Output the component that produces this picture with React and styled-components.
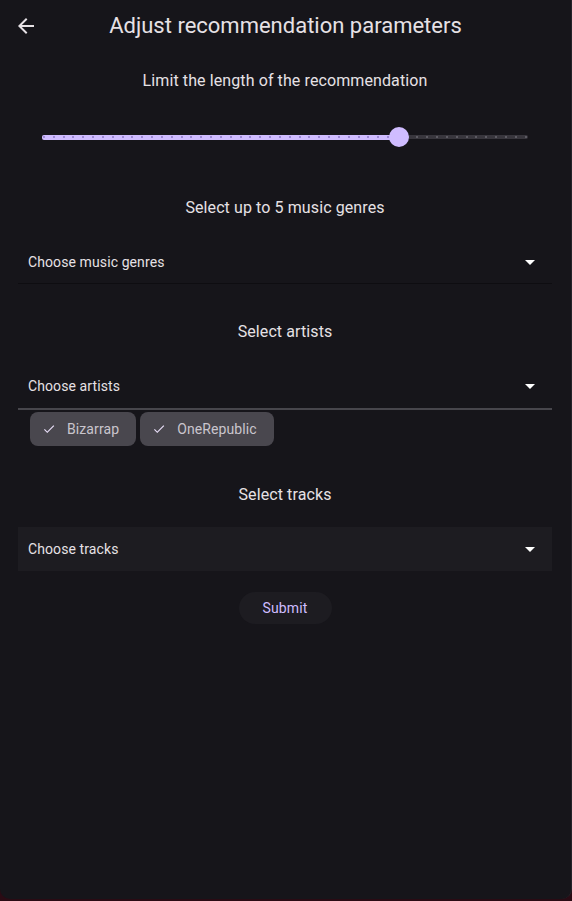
import React from 'react';
import styled, { createGlobalStyle } from 'styled-components';

const GlobalStyle = createGlobalStyle`
  html, body {
    margin: 0;
    padding: 0;
    background: #2a0b14;
    font-family: Roboto, 'Noto Sans', sans-serif;
  }
  * {
    box-sizing: border-box;
  }
`;

const Dialog = styled.div`
  height: 899px;
  background: #16151a;
  border-radius: 0 0 10px 10px;
  border-right: 1px solid #25242a;
  color: #e6e1e5;
  display: flex;
  flex-direction: column;
`;

const Header = styled.header`
  height: 51px;
  display: grid;
  grid-template-columns: 52px 1fr 52px;
  align-items: center;
`;

const BackButton = styled.button`
  width: 24px;
  height: 24px;
  margin: 0 0 0 14px;
  padding: 0;
  border: none;
  background: none;
  color: #e6e1e5;
  display: flex;
  cursor: pointer;
`;

const Title = styled.h1`
  margin: 0;
  text-align: center;
  font-size: 22px;
  font-weight: 400;
  line-height: 28px;
  color: #e6e1e5;
`;

const Content = styled.div`
  display: flex;
  flex-direction: column;
  padding: 0 19px 0 18px;
`;

const Heading = styled.h2`
  margin: ${(p) => p.$top}px 0 0;
  text-align: center;
  font-size: 16px;
  font-weight: 400;
  line-height: 24px;
  letter-spacing: 0.1px;
  color: #e6e1e5;
`;

const SliderWrap = styled.div`
  margin-top: 24px;
  height: 40px;
  padding: 0 24px;
  display: flex;
  align-items: center;
`;

const Track = styled.div`
  position: relative;
  width: 100%;
  height: 4px;
  border-radius: 2px;
  background: #38363d;
`;

const ActiveTrack = styled.div`
  position: absolute;
  left: 0;
  top: -0.5px;
  bottom: -0.5px;
  border-radius: 2px 0 0 2px;
  background: #cfbcff;
`;

const Ticks = styled.div`
  position: absolute;
  inset: 0 1px;
  display: flex;
  justify-content: space-between;
  align-items: center;
`;

const Tick = styled.span`
  width: 2px;
  height: 2px;
  border-radius: 1px;
  background: ${(p) => (p.$active ? '#8c79c9' : '#6a6870')};
`;

const Thumb = styled.span`
  position: absolute;
  top: 50%;
  width: 20px;
  height: 20px;
  margin: -10px 0 0 -10px;
  border-radius: 50%;
  background: #cfbcff;
`;

const Field = styled.div`
  margin-top: 20px;
  height: ${(p) => (p.$strong ? 46 : 44)}px;
  padding: 0 10px;
  display: flex;
  align-items: center;
  justify-content: space-between;
  background: ${(p) => (p.$filled ? '#1d1c21' : 'transparent')};
  border-bottom: ${(p) =>
    p.$filled ? 'none' : p.$strong ? '2px solid #47464c' : '1px solid #0e0d11'};
  font-size: 14px;
  color: #e6e1e5;
  letter-spacing: 0.1px;
`;

const ChipRow = styled.div`
  display: flex;
  gap: 4px;
  padding: 2px 0 2px 12px;
`;

const Chip = styled.div`
  height: 34px;
  display: flex;
  align-items: center;
  gap: 11px;
  padding: 0 17px 0 12px;
  border-radius: 8px;
  background: #49474e;
  color: #c9c5cd;
  font-size: 14px;
  letter-spacing: 0.1px;
`;

const SubmitButton = styled.button`
  margin-top: 21px;
  align-self: center;
  width: 93px;
  height: 32px;
  border: none;
  border-radius: 16px;
  background: #1d1c21;
  color: #cfbcff;
  font-family: Roboto, sans-serif;
  font-size: 14px;
  font-weight: 400;
  letter-spacing: 0.1px;
  cursor: pointer;
`;

const ArrowBackIcon = () => (
  <svg width="24" height="24" viewBox="0 0 24 24" fill="currentColor">
    <path d="M20 11H7.83l5.59-5.59L12 4l-8 8 8 8 1.41-1.41L7.83 13H20v-2z" />
  </svg>
);

const DropIcon = () => (
  <svg width="24" height="24" viewBox="0 0 24 24" fill="#ffffff">
    <path d="M7 10l5 5 5-5z" />
  </svg>
);

const CheckIcon = () => (
  <svg width="14" height="14" viewBox="0 0 24 24" fill="#e8def8">
    <path d="M9 16.17L4.83 12l-1.42 1.41L9 19 21 7l-1.41-1.41z" />
  </svg>
);

function Slider({ min, max, value }) {
  const steps = max - min;
  const pct = ((value - min) / steps) * 100;
  return (
    <SliderWrap>
      <Track>
        <ActiveTrack style={{ width: `${pct}%` }} />
        <Ticks>
          {Array.from({ length: steps + 1 }).map((_, i) => (
            <Tick key={i} $active={i + min <= value} />
          ))}
        </Ticks>
        <Thumb style={{ left: `${pct}%` }} />
      </Track>
    </SliderWrap>
  );
}

export default function App() {
  const artists = ['Bizarrap', 'OneRepublic'];
  return (
    <>
      <GlobalStyle />
      <Dialog>
        <Header>
          <BackButton aria-label="Back">
            <ArrowBackIcon />
          </BackButton>
          <Title>Adjust recommendation parameters</Title>
          <span />
        </Header>
        <Content>
          <Heading $top={18}>Limit the length of the recommendation</Heading>
          <Slider min={1} max={50} value={37} />

          <Heading $top={39}>Select up to 5 music genres</Heading>
          <Field>
            <span>Choose music genres</span>
            <DropIcon />
          </Field>

          <Heading $top={36}>Select artists</Heading>
          <Field $strong>
            <span>Choose artists</span>
            <DropIcon />
          </Field>
          <ChipRow>
            {artists.map((a) => (
              <Chip key={a}>
                <CheckIcon />
                {a}
              </Chip>
            ))}
          </ChipRow>

          <Heading $top={35}>Select tracks</Heading>
          <Field $filled>
            <span>Choose tracks</span>
            <DropIcon />
          </Field>

          <SubmitButton>Submit</SubmitButton>
        </Content>
      </Dialog>
    </>
  );
}
